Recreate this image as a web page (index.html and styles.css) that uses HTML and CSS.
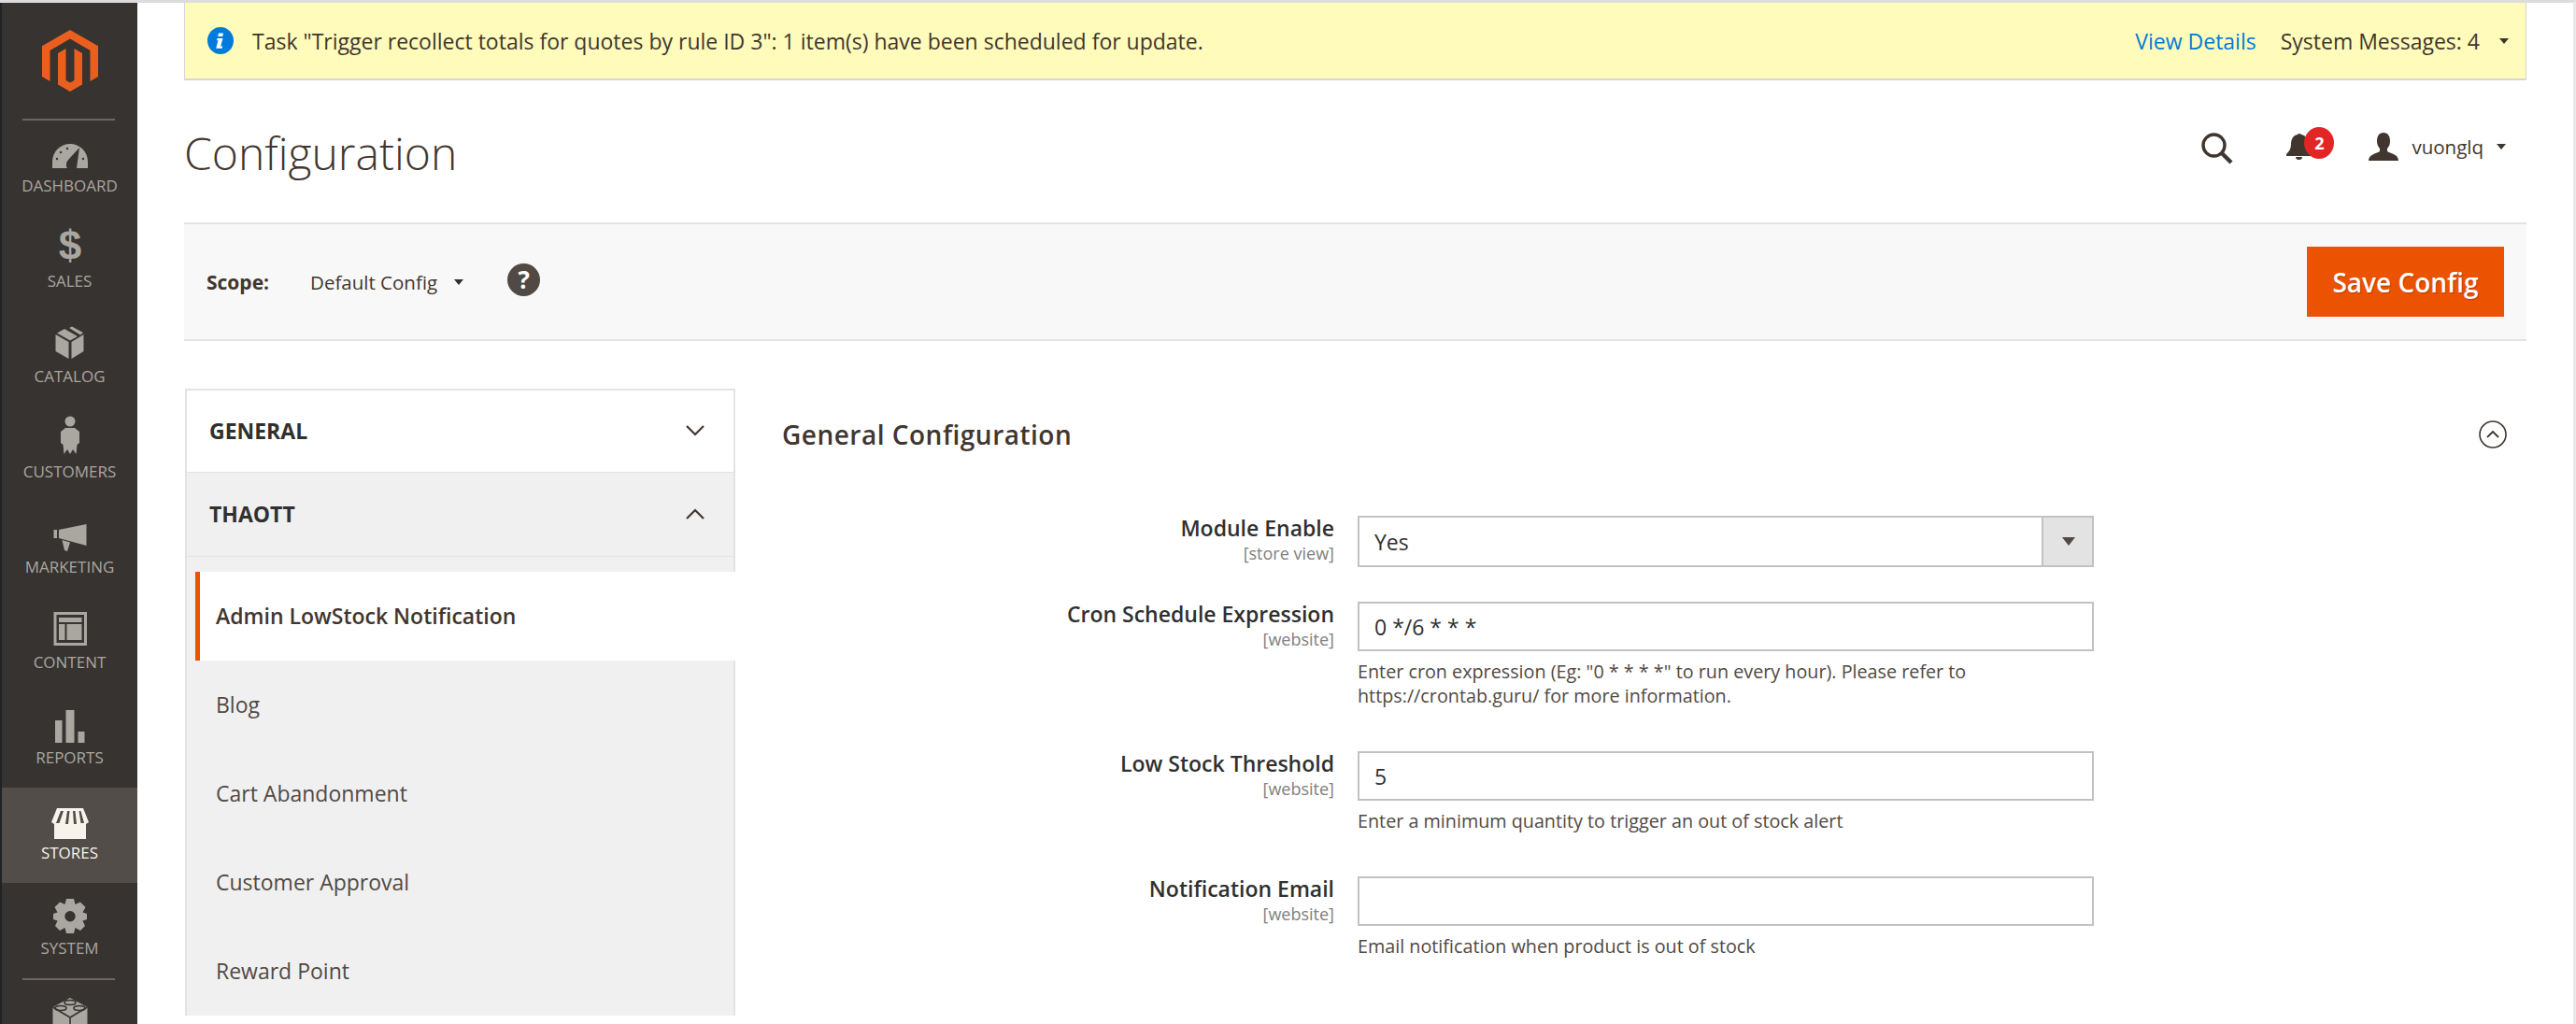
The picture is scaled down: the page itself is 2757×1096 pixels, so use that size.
FILE: index.html
```html
<!DOCTYPE html>
<html>

<head>
  <title>Configuration</title>
  <link rel="stylesheet" href="styles.css">
</head>

<body>
  <div class="page">
    <nav class="sidebar">
      <div class="logo">
        <svg width="60" height="66" viewBox="0 0 60 66">
          <path fill="#eb5f1e" d="M30 0 60 17.3V50L51.5 55V22L30 9.5 8.5 22V55L0 50V17.3Z" />
          <path fill="#eb5f1e" d="M17 25 25.5 20V54L30 56.5 34.5 54V20L43 25V58.5L30 66 17 58.5Z" />
        </svg>
      </div>

      <a class="nav-item">
        <svg class="nav-icon" viewBox="0 0 48 52">
          <path class="fill" d="M5 43V36A19 19 0 0 1 43 36V43H31L34 21 23 33Q18 38 21 43Z" />
          <g class="cut">
            <circle cx="10" cy="33" r="1.2" />
            <circle cx="14" cy="26" r="1.2" />
            <circle cx="21" cy="22" r="1.2" />
            <circle cx="38" cy="33" r="1.2" />
          </g>
        </svg>
        <span>Dashboard</span>
      </a>
      <a class="nav-item">
        <svg class="nav-icon" viewBox="0 0 48 52">
          <text class="dollar" x="24" y="39">$</text>
        </svg>
        <span>Sales</span>
      </a>
      <a class="nav-item">
        <svg class="nav-icon" viewBox="0 0 48 52">
          <path class="fill" d="M8.5 17 22.5 25V43L8.5 35ZM38.5 17V35L25.5 43V25Z" />
          <path class="fill" d="M18 11 32 19 24 23.5 10 15.5ZM23 10 26 8.5 38 15 35 17.5Z" />
        </svg>
        <span>Catalog</span>
      </a>
      <a class="nav-item">
        <svg class="nav-icon" viewBox="0 0 48 52">
          <circle class="fill" cx="24" cy="8" r="5.5" />
          <path class="fill" d="M19 15H29L34 19V31L31.5 33 30.5 43 27 38 24 43 21 38 17.5 43 16.5 33 14 31V19Z" />
        </svg>
        <span>Customers</span>
      </a>
      <a class="nav-item">
        <svg class="nav-icon" viewBox="0 0 48 52">
          <path class="fill" d="M6.5 22H10V31H6.5ZM12 22 41.5 16V39L12 31ZM15.5 33 24 35.5 21 45 18 44Z" />
        </svg>
        <span>Marketing</span>
      </a>
      <a class="nav-item">
        <svg class="nav-icon" viewBox="0 0 48 52">
          <path class="fill" fill-rule="evenodd" d="M6.5 8H42V44H6.5ZM9.5 11V41H39V11Z" />
          <path class="fill" d="M12 14H36.5V19H12ZM12 21H18.5V38H12ZM20.5 21H36.5V38H20.5Z" />
        </svg>
        <span>Content</span>
      </a>
      <a class="nav-item">
        <svg class="nav-icon" viewBox="0 0 48 52">
          <path class="fill" d="M8 22H15.5V46H8ZM19.5 11H28.5V46H19.5ZM32.5 34H39.5V46H32.5Z" />
        </svg>
        <span>Reports</span>
      </a>
      <a class="nav-item active">
        <svg class="nav-icon" viewBox="0 0 48 52">
          <path class="fill" d="M10 14H38L44 29 41 31V47H7V31L4 29Z" />
          <path class="cut" d="M14 17 9 30H12.5L17 17ZM21 17 19 31H22L23.5 17ZM27 17 28 31H31L29.5 17ZM33.5 17 35.5 30H39L35.5 17Z" />
        </svg>
        <span>Stores</span>
      </a>
      <a class="nav-item">
        <svg class="nav-icon" viewBox="0 0 48 52">
          <path class="fill" fill-rule="evenodd" d="M20 9H28L29.5 15 35 12.5 40.5 18 37.5 23.5 42 25V31L37.5 32.5 40 38 35 43 29.5 40 28 46H20L18.5 40 13 43 8 38 10.5 32.5 6 31V25L10.5 23.5 7.5 18 13 12.5 18.5 15ZM24 22A5.7 5.7 0 1 0 24 33.4 5.7 5.7 0 1 0 24 22Z" />
        </svg>
        <span>System</span>
      </a>
      <a class="nav-item nav-last">
        <svg class="nav-icon" viewBox="0 0 48 52">
          <path class="fill" d="M24 7 42.5 17V40L24 50 5.5 40V17Z" />
          <path class="cut-line" d="M5.5 17 24 28 42.5 17M24 28V50" />
          <ellipse class="cut-line" cx="24" cy="12" rx="6" ry="2.5" />
          <ellipse class="cut-line" cx="14" cy="18" rx="6" ry="2.5" />
          <ellipse class="cut-line" cx="34" cy="18" rx="6" ry="2.5" />
        </svg>
      </a>
    </nav>

    <main class="content">
      <div class="notice">
        <svg class="notice-icon" viewBox="0 0 28 29">
          <ellipse cx="14" cy="14.5" rx="14" ry="14.5" fill="#007bdb" />
          <path fill="#fff" d="M12 6.5h5l-.8 3.5h-5zM10.5 12h6l-2.3 8.5h2l-.5 2.2h-6.500l2.300-8.500h-1.500z" />
        </svg>
        <span class="notice-text">Task "Trigger recollect totals for quotes by rule ID 3": 1 item(s) have been scheduled for update.</span>
        <a class="notice-link">View Details</a>
        <span class="notice-count">System Messages: 4</span>
        <i class="caret"></i>
      </div>

      <header class="page-header">
        <h1>Configuration</h1>
        <div class="actions">
          <svg class="search-icon" width="36" height="34" viewBox="0 0 36 34">
            <circle cx="14.5" cy="13.5" r="11.5" fill="none" stroke="#41362f" stroke-width="3.4" />
            <path d="M23 22 33 32" stroke="#41362f" stroke-width="4.4" />
          </svg>
          <div class="bell">
            <svg width="30" height="30" viewBox="0 0 30 30">
              <path fill="#41362f" d="M13 2a2.5 2.5 0 0 1 4 0c5 1 7 5 7 11 0 4 2 7 5 10v2H1v-2c3-3 5-6 5-10 0-6 2-10 7-11zM11 26h7a3.5 3 0 0 1-7 0z" />
            </svg>
            <b class="badge">2</b>
          </div>
          <div class="user">
            <svg width="32" height="30" viewBox="0 0 32 30">
              <path fill="#41362f" d="M16 0c5 0 7 4 7 9 0 3-1 6-3 8v3c3 2 12 3 12 10H0c0-7 9-8 12-10v-3c-2-2-3-5-3-8 0-5 2-9 7-9z" />
            </svg>
            <span>vuonglq</span>
            <i class="caret"></i>
          </div>
        </div>
      </header>

      <div class="scope-bar">
        <div class="scope">
          <b>Scope:</b>
          <span class="scope-value">Default Config</span>
          <i class="caret caret-dark"></i>
          <span class="help">?</span>
        </div>
        <button class="save" type="button">Save Config</button>
      </div>

      <div class="columns">
        <aside class="tabs">
          <div class="tab-head">
            <span>General</span>
            <svg class="chevron" width="20" height="12" viewBox="0 0 20 12"><path d="M1 1 10 10 19 1" /></svg>
          </div>
          <div class="tab-head open">
            <span>Thaott</span>
            <svg class="chevron" width="20" height="12" viewBox="0 0 20 12"><path d="M1 11 10 2 19 11" /></svg>
          </div>
          <ul class="tab-items">
            <li class="current">Admin LowStock Notification</li>
            <li>Blog</li>
            <li>Cart Abandonment</li>
            <li>Customer Approval</li>
            <li>Reward Point</li>
          </ul>
        </aside>

        <section class="config">
          <div class="config-head">
            <h2>General Configuration</h2>
            <svg width="30" height="30" viewBox="0 0 30 30">
              <circle cx="15" cy="15" r="14" fill="none" stroke="#41362f" stroke-width="1.6" />
              <path d="M9 18 15 12 21 18" fill="none" stroke="#41362f" stroke-width="1.8" />
            </svg>
          </div>

          <div class="row row-plain">
            <div class="row-label">
              <label>Module Enable</label>
              <small>[store view]</small>
            </div>
            <div class="row-field">
              <div class="select-wrap">
                <select>
                  <option>Yes</option>
                </select>
                <span class="select-handle"></span>
              </div>
            </div>
          </div>

          <div class="row">
            <div class="row-label">
              <label>Cron Schedule Expression</label>
              <small>[website]</small>
            </div>
            <div class="row-field">
              <input type="text" value="0 */6 * * *" />
              <p class="hint">Enter cron expression (Eg: "0 * * * *" to run every hour). Please refer to https://crontab.guru/ for more information.</p>
            </div>
          </div>

          <div class="row">
            <div class="row-label">
              <label>Low Stock Threshold</label>
              <small>[website]</small>
            </div>
            <div class="row-field">
              <input type="text" value="5" />
              <p class="hint">Enter a minimum quantity to trigger an out of stock alert</p>
            </div>
          </div>

          <div class="row">
            <div class="row-label">
              <label>Notification Email</label>
              <small>[website]</small>
            </div>
            <div class="row-field">
              <input type="text" value="" />
              <p class="hint">Email notification when product is out of stock</p>
            </div>
          </div>
        </section>
      </div>
    </main>
  </div>
</body>

</html>
```

FILE: styles.css
```css
* {
  box-sizing: border-box;
}

html,
body {
  height: 100%;
  margin: 0;
  overflow: hidden;
}

body {
  background: white;
  color: #41362f;
  font-family: 'Open Sans', 'Noto Sans', sans-serif;
  font-size: 23px;
}

.page {
  display: flex;
  height: 100%;
  border-top: 3px solid #dcdcdc;
  border-right: 3px solid #e8e8e8;
}

/* sidebar */

.sidebar {
  flex: 0 0 147px;
  overflow: hidden;
  background: #373330;
  border-left: 2px solid #1f2326;
}

.logo {
  display: flex;
  justify-content: center;
  height: 126px;
  padding-top: 29px;
  position: relative;
}

.logo::after,
.nav-last::before {
  content: '';
  display: block;
  position: absolute;
  left: 22px;
  right: 24px;
  bottom: 0;
  height: 2px;
  background: #6d665f;
}

.nav-item {
  display: flex;
  flex-direction: column;
  align-items: center;
  height: 102px;
  padding-top: 8px;
  color: #aaa6a0;
  font-size: 17px;
  line-height: 20px;
  text-transform: uppercase;
}

.nav-icon {
  display: block;
  width: 48px;
  height: 52px;
  flex: none;
}

.nav-icon .fill {
  fill: #aaa6a0;
}

.nav-icon .cut {
  fill: #373330;
}

.nav-icon .cut-line {
  fill: none;
  stroke: #373330;
  stroke-width: 1.6;
}

.dollar {
  fill: #aaa6a0;
  font-family: 'Liberation Sans', sans-serif;
  font-size: 44px;
  font-weight: bold;
  text-anchor: middle;
}

.nav-item.active {
  background: #524d49;
  color: #f7f3eb;
}

.nav-item.active .fill {
  fill: #f7f3eb;
}

.nav-item.active .cut {
  fill: #524d49;
}

.nav-last {
  position: relative;
  height: 60px;
  padding-top: 14px;
}

.nav-last::before {
  top: 0;
  bottom: auto;
}

/* main column */

.content {
  flex: 1;
  min-width: 0;
  padding: 0 50px;
}

.notice {
  display: flex;
  align-items: center;
  height: 83px;
  padding: 0 18px 0 24px;
  background: #fffbbb;
  border: 1px solid #d6d6d6;
  border-top: 0;
  border-bottom-width: 2px;
  color: #41362f;
}

.notice-icon {
  width: 28px;
  height: 29px;
  margin-right: 20px;
  flex: none;
}

.notice-text {
  flex: 1;
}

.notice-link {
  color: #007bdb;
  margin-right: 26px;
}

.notice-count {
  margin-right: 21px;
}

.caret {
  display: block;
  width: 0;
  height: 0;
  border-style: solid;
  border-width: 6px 5.5px 0;
  border-color: #41362f transparent transparent;
}

.page-header {
  display: flex;
  align-items: center;
  justify-content: space-between;
  height: 152px;
  padding-right: 22px;
}

.page-header h1 {
  margin: 4px 0 0;
  font-size: 48px;
  font-weight: 300;
  line-height: 60px;
}

.actions {
  display: flex;
  align-items: center;
  margin-bottom: 10px;
}

.search-icon {
  margin: 3px 2px 0 0;
}

.bell {
  position: relative;
  display: flex;
  margin-left: 53px;
  margin-right: 59px;
}

.badge {
  position: absolute;
  left: 20px;
  top: -6px;
  width: 32px;
  height: 34px;
  border-radius: 50%;
  background: #e22626;
  color: white;
  font-size: 18px;
  line-height: 34px;
  text-align: center;
}

.user {
  display: flex;
  align-items: center;
  font-size: 20.5px;
}

.user span {
  margin: 0 14px;
}

.scope-bar {
  display: flex;
  align-items: center;
  justify-content: space-between;
  height: 127px;
  padding: 0 24px;
  background: #f8f8f8;
  border-top: 2px solid #e3e3e3;
  border-bottom: 2px solid #e3e3e3;
}

.scope {
  display: flex;
  align-items: center;
  font-size: 20.5px;
}

.scope b {
  font-size: 21px;
  font-weight: 700;
}

.scope-value {
  margin: 0 18px 0 44px;
}

.caret-dark {
  border-top-color: #303030;
}

.help {
  width: 35px;
  height: 35px;
  margin: -4px 0 0 47px;
  border-radius: 50%;
  background: #514943;
  color: white;
  font-size: 26px;
  font-weight: 700;
  line-height: 35px;
  text-align: center;
}

.save {
  width: 211px;
  height: 75px;
  padding: 0;
  border: 0;
  background: #eb5202;
  color: white;
  font-family: inherit;
  font-size: 28px;
  font-weight: 600;
  text-shadow: 1px 1px 1px rgba(0, 0, 0, .25);
}

.columns {
  display: flex;
  align-items: flex-start;
  padding-top: 51px;
}

/* left tabs */

.tabs {
  flex: 0 0 589px;
  margin-left: 1px;
}

.tab-head {
  display: flex;
  align-items: center;
  justify-content: space-between;
  height: 90px;
  padding: 0 31px 2px 24px;
  background: white;
  border: 2px solid #e3e3e3;
  border-bottom-width: 1px;
  font-size: 23px;
  font-weight: 700;
  text-transform: uppercase;
  color: #303030;
}

.tab-head.open {
  background: #f0f0f0;
  border-top: 0;
}

.chevron path {
  fill: none;
  stroke: #41362f;
  stroke-width: 2.2;
}

.tab-items {
  margin: 0;
  padding: 16px 0 0;
  list-style: none;
  background: #f0f0f0;
  border-left: 2px solid #e3e3e3;
  border-right: 2px solid #e3e3e3;
}

.tab-items li {
  height: 95px;
  padding-left: 31px;
  font-size: 23px;
  line-height: 95px;
  color: #514943;
}

.tab-items li.current {
  position: relative;
  margin-left: 9px;
  margin-right: -2px;
  padding-left: 17px;
  border-left: 5px solid #eb5202;
  background: white;
  font-weight: 600;
  color: #41362f;
}

/* config form */

.config {
  flex: 1;
  min-width: 0;
  margin: 0 21px 0 50px;
}

.config-head {
  display: flex;
  align-items: center;
  justify-content: space-between;
  height: 100px;
  margin-bottom: 36px;
  padding-bottom: 2px;
}

.config-head h2 {
  margin: 0;
  font-size: 28px;
  font-weight: 600;
  letter-spacing: .5px;
}

.row {
  display: grid;
  grid-template-columns: 591px 788px;
  column-gap: 25px;
  margin-bottom: 46px;
}

.row-plain {
  margin-bottom: 37px;
}

.row-label {
  text-align: right;
}

.row-label label {
  display: block;
  font-size: 23px;
  font-weight: 600;
  line-height: 26px;
  color: #303030;
}

.row-label small {
  display: block;
  font-size: 18px;
  line-height: 28px;
  color: #808080;
}

.row-field input,
.row-field select {
  display: block;
  width: 100%;
  height: 53px;
  padding: 0 16px;
  background: white;
  border: 2px solid #c2c2c2;
  border-radius: 0;
  color: #303030;
  font-family: inherit;
  font-size: 23px;
}

.row-field select {
  height: 55px;
  appearance: none;
}

.select-wrap {
  position: relative;
}

.select-handle {
  position: absolute;
  top: 0;
  right: 0;
  width: 56px;
  height: 55px;
  background: #e3e3e3;
  border: 2px solid #c2c2c2;
}

.select-handle::after {
  content: '';
  position: absolute;
  left: 20px;
  top: 21px;
  border-style: solid;
  border-width: 9px 7px 0;
  border-color: #514943 transparent transparent;
}

.hint {
  margin: 9px 0 0;
  font-size: 19.75px;
  line-height: 26px;
  color: #514943;
}
```
